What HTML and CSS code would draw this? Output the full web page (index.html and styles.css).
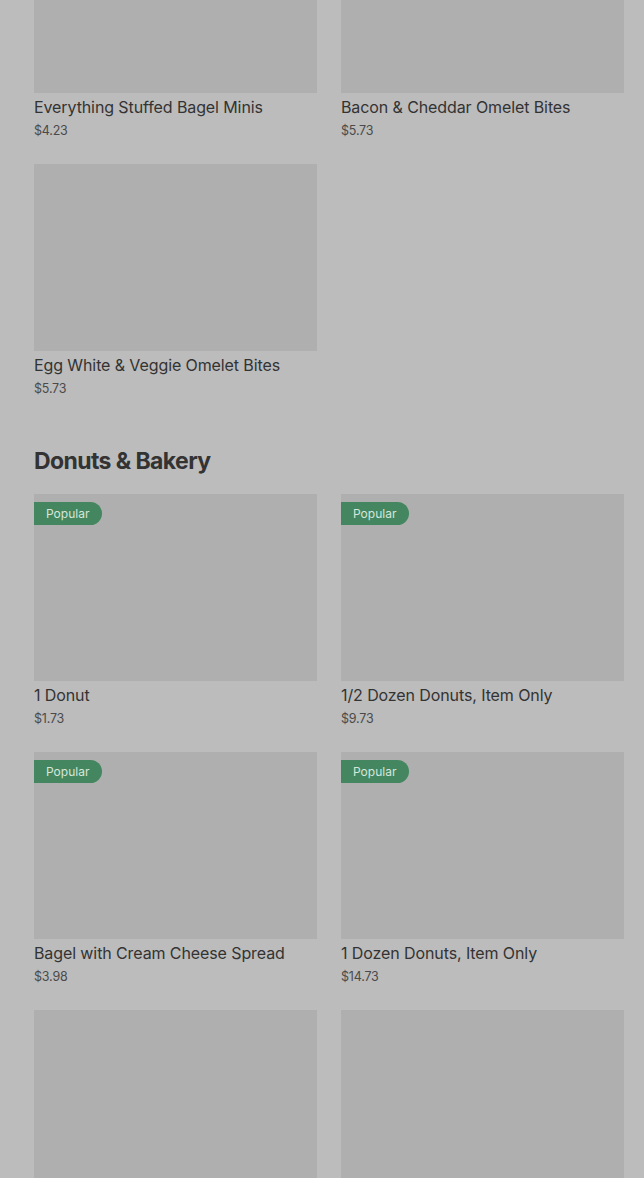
FILE: index.html
```html
<!DOCTYPE html>
<html lang="en">

<head>
    <meta charset="UTF-8">
    <title>Menu</title>
    <link rel="stylesheet" href="styles.css">
</head>

<body>

    <main class="menu">

        <section class="menu-section">
            <div class="item-grid">
                <div class="item">
                    <div class="item-photo"></div>
                    <p class="item-name">Everything Stuffed Bagel Minis</p>
                    <p class="item-price">$4.23</p>
                </div>
                <div class="item">
                    <div class="item-photo"></div>
                    <p class="item-name">Bacon &amp; Cheddar Omelet Bites</p>
                    <p class="item-price">$5.73</p>
                </div>
                <div class="item">
                    <div class="item-photo"></div>
                    <p class="item-name">Egg White &amp; Veggie Omelet Bites</p>
                    <p class="item-price">$5.73</p>
                </div>
            </div>
        </section>

        <section class="menu-section">
            <h2 class="section-title">Donuts &amp; Bakery</h2>
            <div class="item-grid">
                <div class="item">
                    <div class="item-photo"><span class="badge">Popular</span></div>
                    <p class="item-name">1 Donut</p>
                    <p class="item-price">$1.73</p>
                </div>
                <div class="item">
                    <div class="item-photo"><span class="badge">Popular</span></div>
                    <p class="item-name">1/2 Dozen Donuts, Item Only</p>
                    <p class="item-price">$9.73</p>
                </div>
                <div class="item">
                    <div class="item-photo"><span class="badge">Popular</span></div>
                    <p class="item-name">Bagel with Cream Cheese Spread</p>
                    <p class="item-price">$3.98</p>
                </div>
                <div class="item">
                    <div class="item-photo"><span class="badge">Popular</span></div>
                    <p class="item-name">1 Dozen Donuts, Item Only</p>
                    <p class="item-price">$14.73</p>
                </div>
                <div class="item">
                    <div class="item-photo"></div>
                </div>
                <div class="item">
                    <div class="item-photo"></div>
                </div>
            </div>
        </section>

    </main>

</body>

</html>
```

FILE: styles.css
```css
body {
    font-family: 'Inter', 'Roboto', sans-serif;
    margin: 0;
    padding: 0;
    background-color: #bcbcbc;
    color: #363636;
    overflow: hidden;
}

/* page is scrolled, first row starts above the top edge */
.menu {
    margin-top: -94px;
    padding: 0 20px 0 34px;
}

.item-grid {
    display: grid;
    grid-template-columns: 1fr 1fr;
    column-gap: 24px;
    row-gap: 24px;
}

.item-photo {
    position: relative;
    height: 187px;
    background-color: #afafaf;
}

.badge {
    position: absolute;
    top: 8px;
    left: 0;
    height: 23px;
    line-height: 23px;
    padding: 0 13px 0 12px;
    font-size: 12px;
    color: #d6e6dc;
    background-color: #43865f;
    border-radius: 0 12px 12px 0;
}

.item-name {
    margin: 4px 0 0;
    font-size: 16px;
    line-height: 20px;
    font-weight: 400;
    letter-spacing: -0.1px;
    color: #333;
}

.item-price {
    margin: 5px 0 0;
    font-size: 12.5px;
    line-height: 18px;
    letter-spacing: -0.2px;
    color: #4a4a4a;
}

.section-title {
    margin: 47px 0 17px;
    font-size: 23px;
    line-height: 32px;
    font-weight: 700;
    letter-spacing: -0.6px;
    color: #333;
}
```
